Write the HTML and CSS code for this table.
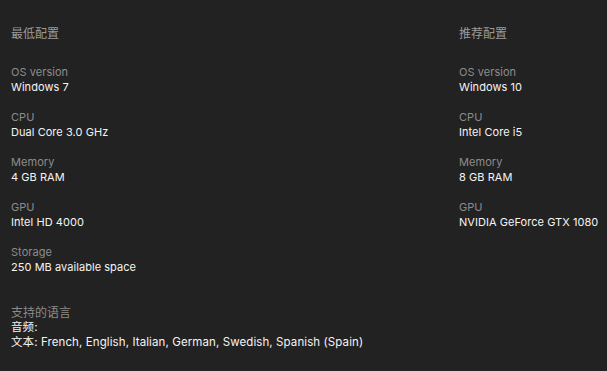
FILE: index.html
```html
<!DOCTYPE html>
<html lang="zh">
<head>
<meta charset="utf-8">
<link rel="stylesheet" href="styles.css">
</head>
<body>
<main class="page">
  <div class="cols">
    <section class="col">
      <h2 class="heading">最低配置</h2>
      <dl class="specs">
        <div class="spec"><dt>OS version</dt><dd>Windows 7</dd></div>
        <div class="spec"><dt>CPU</dt><dd>Dual Core 3.0 GHz</dd></div>
        <div class="spec"><dt>Memory</dt><dd>4 GB RAM</dd></div>
        <div class="spec"><dt>GPU</dt><dd>Intel HD 4000</dd></div>
        <div class="spec"><dt>Storage</dt><dd>250 MB available space</dd></div>
      </dl>
    </section>
    <section class="col">
      <h2 class="heading">推荐配置</h2>
      <dl class="specs">
        <div class="spec"><dt>OS version</dt><dd>Windows 10</dd></div>
        <div class="spec"><dt>CPU</dt><dd>Intel Core i5</dd></div>
        <div class="spec"><dt>Memory</dt><dd>8 GB RAM</dd></div>
        <div class="spec"><dt>GPU</dt><dd>NVIDIA GeForce GTX 1080</dd></div>
      </dl>
    </section>
  </div>
  <section class="langs">
    <div class="langs-title">支持的语言</div>
    <div class="langs-line">音频:</div>
    <div class="langs-line">文本: French, English, Italian, German, Swedish, Spanish (Spain)</div>
  </section>
</main>
</body>
</html>
```

FILE: styles.css
```css
html, body {
  margin: 0;
  padding: 0;
  background: #222222;
}
body {
  font-family: Inter, "Noto Sans CJK SC", sans-serif;
  font-size: 11px;
  line-height: 15px;
  color: #f2f2f2;
}
.page {
  padding: 26px 0 0 11px;
}
.cols {
  display: grid;
  grid-template-columns: 448px auto;
}
.heading {
  margin: 0 0 24px;
  font-size: 12px;
  font-weight: normal;
  line-height: 15px;
  color: #9a9a9a;
}
.specs {
  margin: 0;
  display: flex;
  flex-direction: column;
  gap: 15px;
  letter-spacing: 0.05px;
}
.spec dt {
  color: #8c8c8c;
}
.spec dd {
  margin: 0;
  color: #f4f4f4;
}
.langs {
  margin-top: 30px;
}
.langs-title {
  font-size: 12px;
  color: #8c8c8c;
}
.langs-line {
  font-size: 11.5px;
  letter-spacing: 0.1px;
  color: #f4f4f4;
}
```
